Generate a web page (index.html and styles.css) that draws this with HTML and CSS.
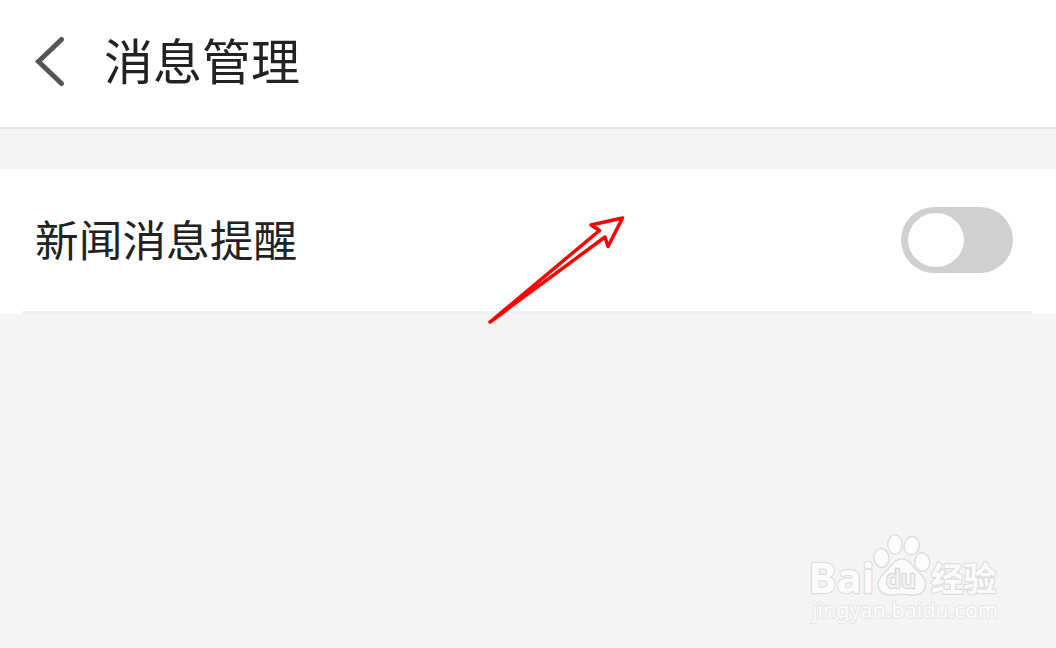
FILE: index.html
```html
<!DOCTYPE html>
<html lang="zh-CN">
<head>
<meta charset="UTF-8">
<meta name="viewport" content="width=device-width, initial-scale=1.0">
<title>消息管理</title>
<link rel="stylesheet" href="styles.css">
</head>
<body>
    <header class="header">
        <button class="back-btn" type="button" aria-label="返回">
            <svg width="32" height="52" viewBox="0 0 32 52">
                <path d="M28.500 3.500 L5.500 25.500 L28.500 47.500"/>
            </svg>
        </button>
        <h1>消息管理</h1>
    </header>

    <main class="settings">
        <label class="setting-row">
            <span class="setting-name">新闻消息提醒</span>
            <input class="switch-input" type="checkbox">
            <span class="switch"></span>
        </label>
    </main>

    <!-- Arrow pointing at the setting -->
    <svg class="arrow" width="150" height="120" viewBox="480 210 150 120">
        <path d="M490 322 L599.500 230.500 L591 225 L622.500 218 L608 246.500 L605 237 Z"/>
    </svg>

    <!-- Watermark -->
    <svg class="watermark" width="210" height="110" viewBox="800 525 210 110">
        <text class="logo-text" x="808.500" y="593" font-size="42" textLength="66" lengthAdjust="spacingAndGlyphs">Bai</text>
        <text class="logo-text logo-cn" x="931" y="590.500" font-size="33" textLength="65" lengthAdjust="spacingAndGlyphs">经验</text>
        <g class="paw">
            <ellipse cx="881.500" cy="558" rx="7.500" ry="9.500" transform="rotate(-8 881.500 558)"/>
            <ellipse cx="895" cy="544.500" rx="7.200" ry="9.800"/>
            <ellipse cx="911.700" cy="545.700" rx="7.500" ry="9.300" transform="rotate(12 911.700 545.700)"/>
            <ellipse cx="922.300" cy="562" rx="7.500" ry="9.300" transform="rotate(-8 922.300 562)"/>
            <path d="M902 559 C909 559 912 565 916 570 C921 575 926 578 925.500 585 C925 592 920 595.500 912 595 C905 594 899 594 892 595 C883 596 878 590 878 584 C878 577 886 572 890 567 C894 562 896 559 902 559 Z"/>
        </g>
        <text class="logo-du" x="886" y="588" font-size="25" textLength="30" lengthAdjust="spacingAndGlyphs">du</text>
        <text class="logo-url" x="812" y="617.500" font-size="21" textLength="186" lengthAdjust="spacingAndGlyphs">jingyan.baidu.com</text>
    </svg>
</body>
</html>
```

FILE: styles.css
```css
* {
    box-sizing: border-box;
}

body {
    margin: 0;
    min-height: 100vh;
    background-color: #f5f5f5;
    color: #222;
    font-family: "Noto Sans CJK SC", sans-serif;
    overflow: hidden;
}

.header {
    display: flex;
    align-items: center;
    height: 129px;
    padding: 0 33px 4px;
    background-color: #fff;
    border-bottom: 2px solid #e5e5e5;
}

.back-btn {
    display: flex;
    padding: 0;
    border: none;
    background: none;
    cursor: pointer;
}

.back-btn path {
    fill: none;
    stroke: #555;
    stroke-width: 5;
    stroke-linecap: round;
}

h1 {
    margin: 0 0 0 39px;
    padding-bottom: 6px;
    font-size: 49px;
    font-weight: 400;
    line-height: 60px;
}

.settings {
    margin-top: 40px;
    padding: 0 24px 0 22px;
    background-color: #fff;
}

.setting-row {
    display: flex;
    align-items: center;
    justify-content: space-between;
    height: 145px;
    padding: 0 19px 0 13px;
    border-bottom: 3px solid #f1f1f1;
}

.setting-name {
    padding-bottom: 4px;
    font-size: 43.700px;
    line-height: 60px;
}

.switch-input {
    display: none;
}

.switch {
    width: 112px;
    height: 66px;
    padding: 6px 7px;
    border-radius: 33px;
    background-color: #d0d0d0;
}

.switch::before {
    content: "";
    display: block;
    width: 56px;
    height: 54px;
    border-radius: 50%;
    background-color: #fff;
}

.switch-input:checked + .switch::before {
    margin-left: auto;
}

.arrow {
    position: absolute;
    left: 480px;
    top: 210px;
    pointer-events: none;
}

.arrow path {
    fill: none;
    stroke: #f00;
    stroke-width: 3.500;
    stroke-linejoin: round;
}

.watermark {
    position: absolute;
    left: 800px;
    top: 525px;
    fill: #fcfcfc;
    stroke: #dedede;
    stroke-width: 1.500;
    pointer-events: none;
}

.watermark text {
    paint-order: stroke;
    stroke-width: 2.500;
    stroke-linejoin: round;
}

.logo-text {
    font-family: "Open Sans", sans-serif;
    font-weight: 700;
}

.logo-cn {
    font-family: "Noto Sans CJK SC", sans-serif;
}

.watermark .logo-du {
    font-family: "Open Sans", sans-serif;
    font-weight: 600;
    fill: #f3f3f3;
    stroke: #d6d6d6;
}

.watermark .logo-url {
    font-family: "Noto Sans", sans-serif;
    font-weight: 400;
    stroke: #e6e6e6;
    stroke-width: 2;
}
```
